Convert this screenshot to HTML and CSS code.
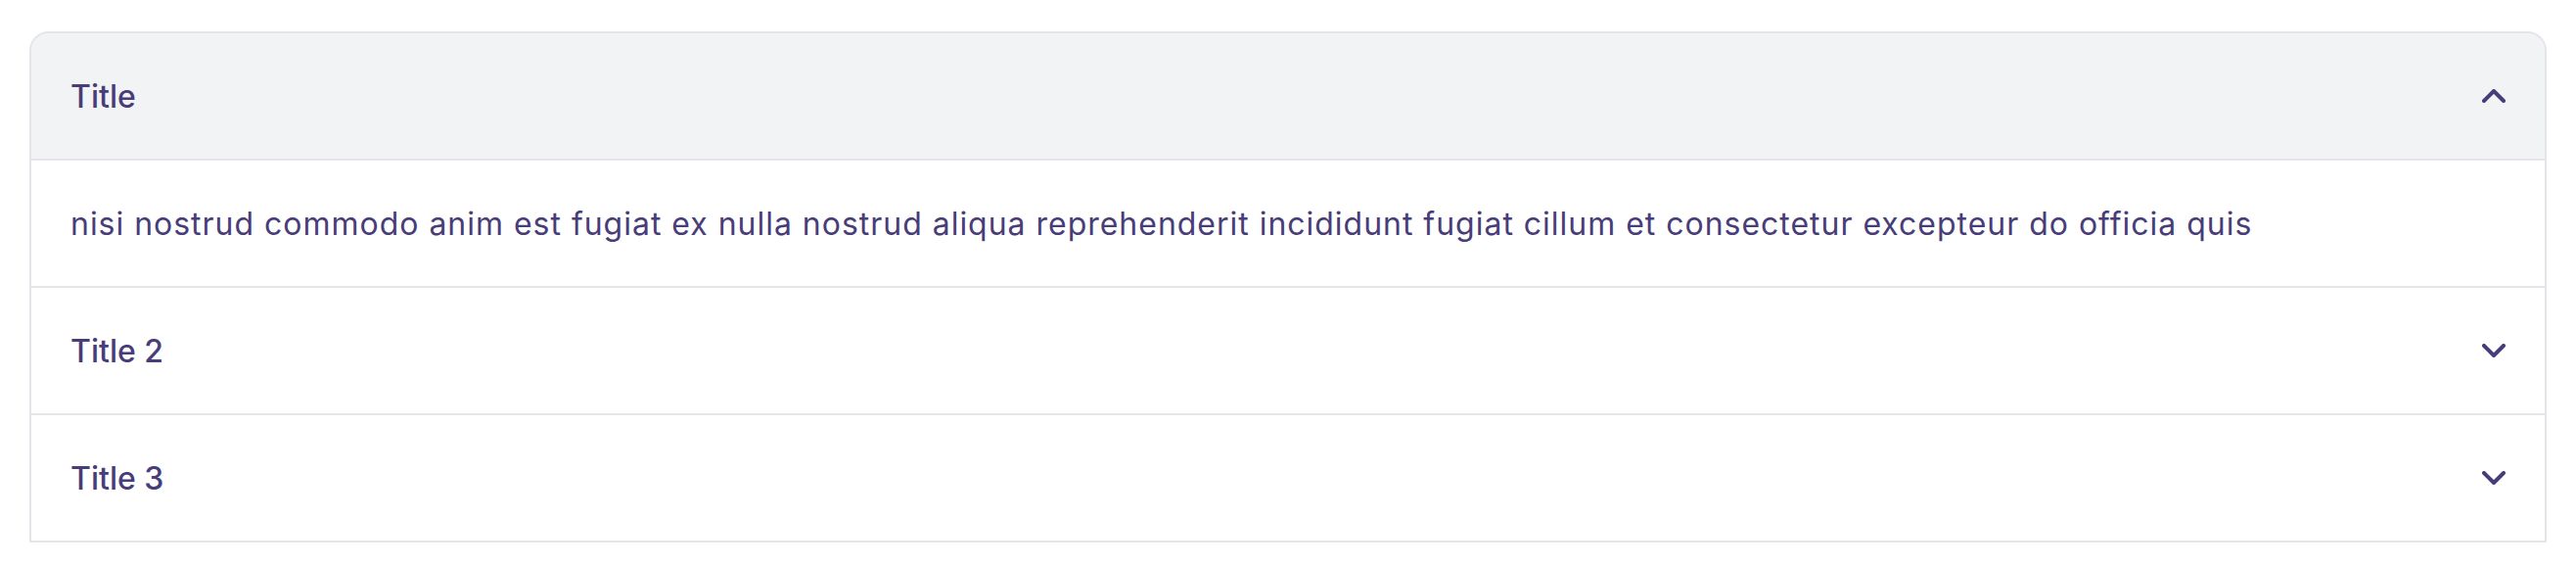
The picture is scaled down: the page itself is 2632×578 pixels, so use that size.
FILE: index.html
```html
<!DOCTYPE html>
<html lang="en">
<head>
<meta charset="utf-8">
<title>Accordion</title>
<link rel="stylesheet" href="styles.css">
</head>
<body>
<div class="accordion">
  <div class="item open">
    <button class="head">
      <span class="title">Title</span>
      <svg class="chev" width="24" height="14" viewBox="0 0 24 14"><polyline points="2,12 12,2 22,12"/></svg>
    </button>
    <div class="body">nisi nostrud commodo anim est fugiat ex nulla nostrud aliqua reprehenderit incididunt fugiat cillum et consectetur excepteur do officia quis</div>
  </div>
  <div class="item">
    <button class="head">
      <span class="title">Title 2</span>
      <svg class="chev" width="24" height="14" viewBox="0 0 24 14"><polyline points="2,2 12,12 22,2"/></svg>
    </button>
  </div>
  <div class="item">
    <button class="head">
      <span class="title">Title 3</span>
      <svg class="chev" width="24" height="14" viewBox="0 0 24 14"><polyline points="2,2 12,12 22,2"/></svg>
    </button>
  </div>
</div>
</body>
</html>
```
FILE: styles.css
```css
html, body {
  margin: 0;
  background: #ffffff;
}
body {
  padding: 32px 30px;
  font-family: "Inter", "Noto Sans", sans-serif;
  color: #483d78;
}
.accordion {
  border: 2px solid #e4e4ea;
  border-radius: 20px 20px 0 0;
  overflow: hidden;
  background: #ffffff;
}
.item + .item {
  border-top: 2px solid #e4e4ea;
}
.head {
  display: flex;
  align-items: center;
  justify-content: space-between;
  width: 100%;
  height: 128px;
  padding: 0 40px;
  margin: 0;
  border: 0;
  background: #ffffff;
  font: inherit;
  color: inherit;
  cursor: pointer;
}
.item.open .head {
  background: #f2f3f5;
  border-bottom: 2px solid #e4e4ea;
  height: 130px;
}
.title {
  font-size: 32px;
  font-weight: 500;
}
.chev polyline {
  fill: none;
  stroke: #483d78;
  stroke-width: 4;
  stroke-linecap: round;
  stroke-linejoin: round;
}
.body {
  display: flex;
  align-items: center;
  height: 128px;
  padding: 0 40px;
  font-size: 32px;
  font-weight: 400;
  letter-spacing: 0.98px;
}
```
